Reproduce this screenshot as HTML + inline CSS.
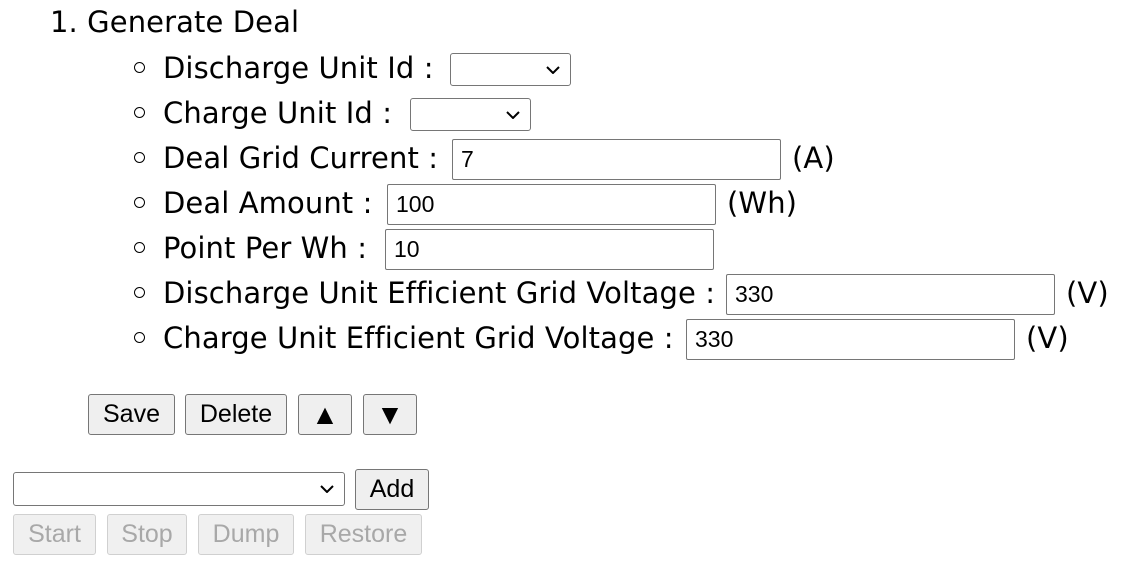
<!DOCTYPE html>
<html><head><style>
body{margin:0;width:1141px;height:583px;background:#fff;position:relative;overflow:hidden;font-family:"DejaVu Sans","Liberation Sans",sans-serif;color:#000}
.t{position:absolute;font-size:29px;letter-spacing:0.1px;line-height:34px;white-space:nowrap}
.b{position:absolute;width:9px;height:9px;border:1.5px solid #000;border-radius:50%}
.in{position:absolute;box-sizing:border-box;border:1.5px solid #767676;border-radius:2px;background:#fff;font-family:"Liberation Sans",sans-serif;font-size:23px;padding-left:8px;display:flex;align-items:center}
.sel{position:absolute;box-sizing:border-box;border:1.5px solid #767676;border-radius:3px;background:#fff}
.sel svg{position:absolute;right:10px;top:50%;margin-top:-4px}
.btn{position:absolute;box-sizing:border-box;border:1.5px solid #767676;border-radius:3px;background:#efefef;font-family:"Liberation Sans",sans-serif;font-size:25px;display:flex;align-items:center;justify-content:center}
.dis{border-color:#d0d0d0;color:#a8a8a8;background:#f0f0f0}
</style></head><body>
<div class="t" style="left:50px;top:5px">1. Generate Deal</div>

<div class="b" style="left:134px;top:62px"></div><div class="t" style="left:163px;top:51px">Discharge Unit Id :</div>
<div class="sel" style="left:450px;top:53px;width:121px;height:33px"><svg width="14" height="8"><path d="M1 1L7 7L13 1" fill="none" stroke="#000" stroke-width="2"/></svg></div>

<div class="b" style="left:134px;top:107px"></div><div class="t" style="left:163px;top:96px">Charge Unit Id :</div>
<div class="sel" style="left:410px;top:98px;width:121px;height:33px"><svg width="14" height="8"><path d="M1 1L7 7L13 1" fill="none" stroke="#000" stroke-width="2"/></svg></div>

<div class="b" style="left:134px;top:152px"></div><div class="t" style="left:163px;top:141px">Deal Grid Current :</div>
<div class="in" style="left:452px;top:139px;width:329px;height:41px">7</div><div class="t" style="left:792px;top:141px">(A)</div>

<div class="b" style="left:134px;top:197px"></div><div class="t" style="left:163px;top:186px">Deal Amount :</div>
<div class="in" style="left:387px;top:184px;width:329px;height:41px">100</div><div class="t" style="left:727px;top:186px">(Wh)</div>

<div class="b" style="left:134px;top:242px"></div><div class="t" style="left:163px;top:231px">Point Per Wh :</div>
<div class="in" style="left:385px;top:229px;width:329px;height:41px">10</div>

<div class="b" style="left:134px;top:287px"></div><div class="t" style="left:163px;top:276px">Discharge Unit Efficient Grid Voltage :</div>
<div class="in" style="left:726px;top:274px;width:329px;height:41px">330</div><div class="t" style="left:1066px;top:276px">(V)</div>

<div class="b" style="left:134px;top:332px"></div><div class="t" style="left:163px;top:321px">Charge Unit Efficient Grid Voltage :</div>
<div class="in" style="left:686px;top:319px;width:329px;height:41px">330</div><div class="t" style="left:1026px;top:321px">(V)</div>

<div class="btn" style="left:88px;top:394px;width:87px;height:41px">Save</div>
<div class="btn" style="left:185px;top:394px;width:102px;height:41px">Delete</div>
<div class="btn" style="left:298px;top:394px;width:54px;height:41px;font-size:28px">▲</div>
<div class="btn" style="left:363px;top:394px;width:54px;height:41px;font-size:28px">▼</div>

<div class="sel" style="left:13px;top:472px;width:332px;height:34px"><svg width="14" height="8"><path d="M1 1L7 7L13 1" fill="none" stroke="#000" stroke-width="2"/></svg></div>
<div class="btn" style="left:355px;top:469px;width:74px;height:41px">Add</div>

<div class="btn dis" style="left:13px;top:514px;width:83px;height:41px">Start</div>
<div class="btn dis" style="left:107px;top:514px;width:80px;height:41px">Stop</div>
<div class="btn dis" style="left:198px;top:514px;width:96px;height:41px">Dump</div>
<div class="btn dis" style="left:305px;top:514px;width:117px;height:41px">Restore</div>
</body></html>
